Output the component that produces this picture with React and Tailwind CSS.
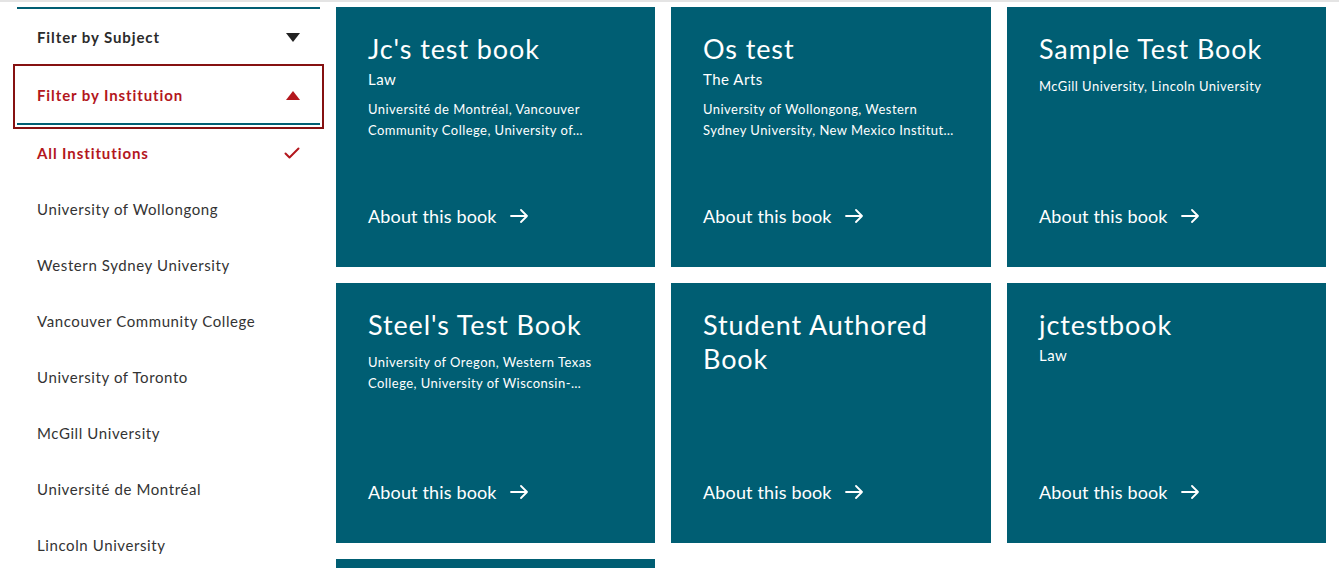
import React from 'react'

// Sidebar filters + grid of book cards
const institutions = [
  'University of Wollongong',
  'Western Sydney University',
  'Vancouver Community College',
  'University of Toronto',
  'McGill University',
  'Université de Montréal',
  'Lincoln University',
]

const books = [
  { title: "Jc's test book", subject: 'Law', inst: 'Université de Montréal, Vancouver Community College, University of…' },
  { title: 'Os test', subject: 'The Arts', inst: 'University of Wollongong, Western Sydney University, New Mexico Institut…' },
  { title: 'Sample Test Book', inst: 'McGill University, Lincoln University' },
  { title: "Steel's Test Book", inst: 'University of Oregon, Western Texas College, University of Wisconsin-…' },
  { title: 'Student Authored Book' },
  { title: 'jctestbook', subject: 'Law' },
  { title: '' },
]

function Arrow() {
  return (
    <svg width="19" height="14" viewBox="0 0 19 14" fill="none" stroke="currentColor" strokeWidth="1.8" strokeLinecap="round" strokeLinejoin="round">
      <path d="M1 7h16M11 1l6 6-6 6" />
    </svg>
  )
}

function Check() {
  return (
    <svg width="16" height="12" viewBox="0 0 16 12" fill="none" stroke="#b3171d" strokeWidth="2" strokeLinecap="round" strokeLinejoin="round">
      <path d="M1.5 6.5l4 4 9-9" />
    </svg>
  )
}

function BookCard({ book }) {
  return (
    <div className="h-[260px] bg-[#005e73] text-white pl-8 pr-[30px] pt-[25px] pb-[39px] flex flex-col">
      <div className="text-[27px] leading-[34px] tracking-[0.9px]">{book.title}</div>
      {book.subject && <div className="text-[15px] leading-[20px] mt-[3px] tracking-[0.5px]">{book.subject}</div>}
      {book.inst && (
        <div className="text-[13px] leading-[21px] mt-[10px] line-clamp-2 tracking-[0.45px]">{book.inst}</div>
      )}
      {book.title && (
        <div className="mt-auto flex items-center gap-[13px] text-[18px] leading-[24px] tracking-[0.15px]">
          About this book <Arrow />
        </div>
      )}
    </div>
  )
}

export default function App() {
  return (
    <div className="w-[1339px] h-[568px] overflow-hidden bg-white border-t-2 border-[#e4e4e4] font-['Lato',sans-serif]">
      <div className="flex pt-[5px]">
        <aside className="w-[320px] pl-[17px] shrink-0">
          <div className="border-t-2 border-[#005e73] h-[61px] flex items-center justify-between pl-5 pr-[20px] pb-[3px]">
            <span className="text-[15px] font-bold text-[#2b2b2b] tracking-[0.9px]">Filter by Subject</span>
            <span className="w-0 h-0 border-l-[7px] border-r-[7px] border-t-[9px] border-l-transparent border-r-transparent border-t-[#222]" />
          </div>
          <div className="h-[57px] flex items-center justify-between pl-5 pr-[20px] border-b-2 border-[#005e73] outline-2 outline-offset-2 outline-[#861111]">
            <span className="text-[15px] font-bold text-[#b3171d] tracking-[0.9px]">Filter by Institution</span>
            <span className="w-0 h-0 border-l-[7px] border-r-[7px] border-b-[9px] border-l-transparent border-r-transparent border-b-[#b3171d]" />
          </div>
          <ul>
            <li className="h-[56px] flex items-center justify-between pl-5 pr-[20px]">
              <span className="text-[15px] font-bold text-[#b3171d] tracking-[0.9px]">All Institutions</span>
              <Check />
            </li>
            {institutions.map((name) => (
              <li key={name} className="h-[56px] flex items-center pl-5 text-[15px] text-[#333] tracking-[0.6px]">
                {name}
              </li>
            ))}
          </ul>
        </aside>
        <main className="ml-4 grid grid-cols-[319px_320px_319px] gap-4">
          {books.map((b, i) => (
            <BookCard key={i} book={b} />
          ))}
        </main>
      </div>
    </div>
  )
}
